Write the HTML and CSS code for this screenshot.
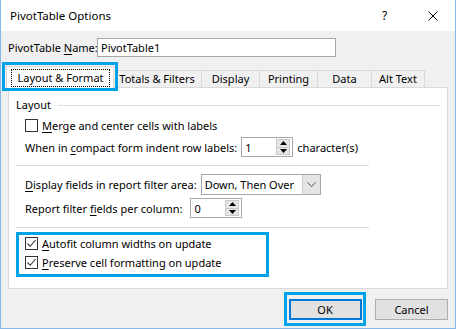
FILE: index.html
```html
<!DOCTYPE html>
<html>
<head>
<meta charset="utf-8">
<link rel="stylesheet" href="styles.css">
</head>
<body>
<div class="window">
  <div class="titlebar">
    <span class="title">PivotTable Options</span>
    <span class="help">?</span>
    <svg class="close" width="10" height="10" viewBox="0 0 10 10"><path d="M0.5 0.5 L9.5 9.5 M9.5 0.5 L0.5 9.5" stroke="#000" stroke-width="1" fill="none"/></svg>
  </div>
  <div class="name-row">
    <span class="label">PivotTable <u>N</u>ame:</span>
    <div class="textbox">PivotTable1</div>
  </div>
  <div class="tabs">
    <div class="tab selected"><span class="focus">Layout &amp; Format</span></div>
    <div class="tab w-totals">Totals &amp; Filters</div>
    <div class="tab w-display">Display</div>
    <div class="tab w-printing">Printing</div>
    <div class="tab w-data">Data</div>
    <div class="tab w-alt">Alt Text</div>
  </div>
  <div class="panel">
    <div class="group-title"><span>Layout</span><div class="group-line"></div></div>
    <div class="row indent row-merge">
      <span class="checkbox"></span>
      <span><u>M</u>erge and center cells with labels</span>
    </div>
    <div class="row indent row-compact">
      <span>When in <u>c</u>ompact form indent row labels:</span>
      <div class="spin">
        <span class="spin-value">1</span>
        <div class="spin-buttons">
          <div class="spin-btn"><svg width="7" height="4" viewBox="0 0 7 4"><path d="M3.5 0 L7 4 L0 4 Z" fill="#000"/></svg></div>
          <div class="spin-btn"><svg width="7" height="4" viewBox="0 0 7 4"><path d="M0 0 L7 0 L3.5 4 Z" fill="#000"/></svg></div>
        </div>
      </div>
      <span>character(s)</span>
    </div>
    <div class="separator sep1"></div>
    <div class="row indent row-display">
      <span><u>D</u>isplay fields in report filter area:</span>
      <div class="dropdown">
        <span class="dropdown-value">Down, Then Over</span>
        <div class="dropdown-arrow"><svg width="9" height="5" viewBox="0 0 9 5"><path d="M0.5 0.5 L4.5 4.5 L8.5 0.5" stroke="#555" stroke-width="1" fill="none"/></svg></div>
      </div>
    </div>
    <div class="row indent row-report">
      <span>Report filter <u>f</u>ields per column:</span>
      <div class="spin spin-report">
        <span class="spin-value">0</span>
        <div class="spin-buttons">
          <div class="spin-btn"><svg width="7" height="4" viewBox="0 0 7 4"><path d="M3.5 0 L7 4 L0 4 Z" fill="#000"/></svg></div>
          <div class="spin-btn"><svg width="7" height="4" viewBox="0 0 7 4"><path d="M0 0 L7 0 L3.5 4 Z" fill="#000"/></svg></div>
        </div>
      </div>
    </div>
    <div class="separator sep2"></div>
    <div class="highlight-box">
      <div class="row check-row">
        <span class="checkbox checked"><svg width="11" height="11" viewBox="0 0 11 11"><path d="M1.5 5.5 L4.2 8.3 L9.6 2" stroke="#333" stroke-width="1.1" fill="none"/></svg></span>
        <span><u>A</u>utofit column widths on update</span>
      </div>
      <div class="row check-row">
        <span class="checkbox checked"><svg width="11" height="11" viewBox="0 0 11 11"><path d="M1.5 5.5 L4.2 8.3 L9.6 2" stroke="#333" stroke-width="1.1" fill="none"/></svg></span>
        <span><u>P</u>reserve cell formatting on update</span>
      </div>
    </div>
  </div>
  <div class="buttons">
    <div class="ok-highlight"><div class="btn ok">OK</div></div>
    <div class="btn cancel">Cancel</div>
  </div>
</div>
</body>
</html>
```

FILE: styles.css
```css
html, body {
  margin: 0;
  padding: 0;
  background: #f0f0f0;
}

.window {
  width: 456px;
  height: 329px;
  box-sizing: border-box;
  border: 1px solid #86b8ea;
  border-top: 0;
  background: #f0f0f0;
  display: flex;
  flex-direction: column;
  font-family: "Noto Sans", sans-serif;
  font-size: 11px;
  color: #000;
  overflow: hidden;
  white-space: nowrap;
}

u {
  text-decoration-thickness: 1px;
  text-underline-offset: 2px;
}

.titlebar {
  height: 31px;
  flex: none;
  background: #fff;
  display: flex;
  align-items: center;
  padding-left: 9px;
  box-sizing: border-box;
}

.title {
  flex: 1;
  font-size: 11.5px;
}

.help {
  width: 10px;
  margin-right: 36px;
  font-size: 12px;
}

.close {
  margin-right: 17px;
}

.name-row {
  display: flex;
  align-items: center;
  margin-top: 7px;
  padding-left: 7px;
  height: 19px;
}

.label {
  width: 89px;
  flex: none;
}

.textbox {
  width: 239px;
  height: 19px;
  box-sizing: border-box;
  border: 1px solid #a6a6a6;
  background: #fff;
  padding-left: 3px;
  line-height: 17px;
}

.tabs {
  display: flex;
  align-items: flex-end;
  margin-top: 9px;
  padding-left: 5px;
  height: 21px;
  position: relative;
  z-index: 1;
}

.tab {
  height: 17px;
  box-sizing: border-box;
  border: 1px solid #d9d9d9;
  border-bottom: 0;
  margin-left: -1px;
  background: #f0f0f0;
  text-align: center;
  line-height: 16px;
}

.tab.selected {
  height: 22px;
  margin-bottom: -1px;
  width: 108px;
  background: #fff;
  margin-left: 0;
  margin-right: -1px;
  padding: 2px 3px 0 4px;
  position: relative;
  z-index: 2;
}

.tab.selected::after {
  content: "";
  position: absolute;
  left: -5px;
  top: -5px;
  right: -5px;
  bottom: -3px;
  border: 3px solid #00a2e8;
}

.focus {
  display: block;
  border: 1px dotted #000;
  height: 18px;
  box-sizing: border-box;
  line-height: 16px;
}

.w-totals { width: 90px; }
.w-display { width: 59px; }
.w-printing { width: 59px; }
.w-data { width: 55px; }
.w-alt { width: 54px; }

.panel {
  margin: 0 7px;
  height: 202px;
  box-sizing: border-box;
  border: 1px solid #d9d9d9;
  background: #fff;
  padding: 0 7px 0 7px;
  display: flex;
  flex-direction: column;
  flex: none;
}

.group-title {
  display: flex;
  align-items: center;
  margin-top: 9px;
  height: 16px;
  line-height: 16px;
}

.group-line {
  flex: 1;
  height: 1px;
  background: #dcdcdc;
  margin-left: 7px;
}

.row {
  display: flex;
  align-items: center;
}

.indent {
  padding-left: 9px;
}

.row-merge {
  margin-top: 4px;
  height: 17px;
}

.checkbox {
  width: 13px;
  height: 13px;
  box-sizing: border-box;
  border: 1px solid #333;
  margin-right: 4px;
  display: flex;
  align-items: center;
  justify-content: center;
  flex: none;
  background: #fff;
}

.row-compact {
  margin-top: 3px;
  height: 20px;
}

.spin {
  width: 52px;
  height: 20px;
  box-sizing: border-box;
  border: 1px solid #a6a6a6;
  margin-left: 4px;
  margin-right: 4px;
  display: flex;
  align-items: center;
  background: #fff;
}

.spin-report {
  margin-left: 8px;
}

.spin-value {
  flex: 1;
  padding-left: 3px;
}

.spin-buttons {
  width: 14px;
  height: 16px;
  margin-right: 2px;
  display: flex;
  flex-direction: column;
  border: 1px solid #c8c8c8;
  box-sizing: border-box;
}

.spin-btn {
  flex: 1;
  background: #e6e6e6;
  display: flex;
  align-items: center;
  justify-content: center;
}

.spin-btn + .spin-btn {
  border-top: 1px solid #c8c8c8;
}

.separator {
  width: 353px;
  height: 1px;
  background: #dcdcdc;
}

.sep1 { margin-top: 8px; }
.sep2 { margin-top: 9px; }

.row-display {
  margin-top: 8px;
  height: 21px;
}

.dropdown {
  width: 120px;
  height: 21px;
  box-sizing: border-box;
  border: 1px solid #a6a6a6;
  margin-left: 4px;
  display: flex;
  align-items: stretch;
  background: #fff;
}

.dropdown-value {
  flex: 1;
  padding-left: 3px;
  line-height: 19px;
}

.dropdown-arrow {
  width: 17px;
  background: #e5e5e5;
  border-left: 1px solid #d0d0d0;
  display: flex;
  align-items: center;
  justify-content: center;
}

.row-report {
  margin-top: 3px;
  height: 20px;
}

.highlight-box {
  margin-top: 4px;
  width: 253px;
  height: 45px;
  box-sizing: border-box;
  border: 3px solid #00a2e8;
  padding-left: 6px;
  display: flex;
  flex-direction: column;
  gap: 3px;
}

.check-row {
  height: 16px;
}

.buttons {
  display: flex;
  justify-content: flex-end;
  align-items: center;
  padding-right: 7px;
  margin-top: 3px;
}

.ok-highlight {
  width: 82px;
  height: 34px;
  box-sizing: border-box;
  border: 3px solid #00a2e8;
  display: flex;
  align-items: center;
  justify-content: center;
  margin-right: 9px;
}

.btn {
  width: 73px;
  height: 21px;
  box-sizing: border-box;
  border: 1px solid #adadad;
  background: #e1e1e1;
  text-align: center;
  line-height: 19px;
}

.btn.ok {
  border: 2px solid #0078d7;
  line-height: 17px;
}
```
